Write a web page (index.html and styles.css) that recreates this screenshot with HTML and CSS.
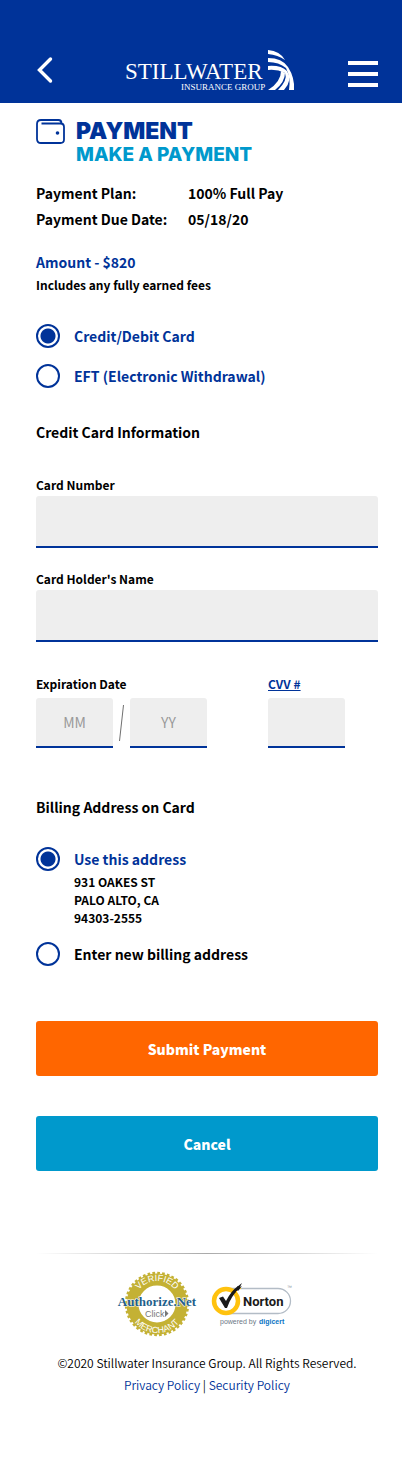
FILE: index.html
```html
<!DOCTYPE html>
<html lang="en">

<head>
    <meta charset="UTF-8">
    <meta name="viewport" content="width=device-width, initial-scale=1.0">
    <title>Make a Payment</title>
    <link rel="stylesheet" href="styles.css">
</head>

<body>
    <header class="topbar">
        <a class="back" href="#" aria-label="Back">
            <svg width="16" height="28" viewBox="0 0 16 28">
                <path d="M13.500 3L2.500 14L13.500 25" fill="none" stroke="#fff" stroke-width="3.400" stroke-linecap="round" stroke-linejoin="miter" />
            </svg>
        </a>
        <a class="logo" href="#" aria-label="Stillwater Insurance Group">
            <svg width="170" height="42" viewBox="0 0 170 42">
                <text class="logo-name" x="0" y="30">STILLWATER</text>
                <text class="logo-sub" x="56" y="41">INSURANCE GROUP</text>
                <g fill="#fff">
                    <path d="M143 1Q155 2 160 11Q153 6 143 5Z" />
                    <path d="M143 9Q157 9 163 18Q170 29 169 41H164Q166 29 161 19Q154 13 143 13Z" />
                    <path d="M143 17Q156 16 162 22Q168 31 159 41H153Q163 31 160 24Q152 20 143 21Z" />
                    <path d="M156 22L160 24Q160 33 150 41H143Q156 33 156 22Z" />
                </g>
            </svg>
        </a>
        <button class="menu" type="button" aria-label="Menu">
            <span></span>
            <span></span>
            <span></span>
        </button>
    </header>

    <main>
        <div class="heading">
            <svg width="30" height="26" viewBox="0 0 30 26" fill="none" stroke="#039" stroke-width="1.800">
                <path d="M5.500 4.500H24.500Q28 4.500 28 8V20.500Q28 24 24.500 24H5Q1 24 1 20V5Q1 1 5 1H22.500Q25.500 1 25.500 4.500" />
                <circle cx="21.500" cy="14" r="1.800" fill="#039" stroke="none" />
            </svg>
            <div>
                <h1>PAYMENT</h1>
                <h2>MAKE A PAYMENT</h2>
            </div>
        </div>

        <dl class="plan">
            <dt>Payment Plan:</dt>
            <dd>100% Full Pay</dd>
            <dt>Payment Due Date:</dt>
            <dd>05/18/20</dd>
        </dl>

        <p class="amount">Amount - $820</p>
        <p class="note">Includes any fully earned fees</p>

        <form>
            <div class="methods">
                <label class="choice"><input type="radio" name="method" checked>Credit/Debit Card</label>
                <label class="choice"><input type="radio" name="method">EFT (Electronic Withdrawal)</label>
            </div>

            <h3>Credit Card Information</h3>

            <div class="field">
                <label for="number">Card Number</label>
                <input type="text" id="number">
            </div>
            <div class="field">
                <label for="holder">Card Holder's Name</label>
                <input type="text" id="holder">
            </div>

            <div class="codes">
                <div class="field">
                    <label for="month">Expiration Date</label>
                    <div class="expiry">
                        <input type="text" id="month" placeholder="MM">
                        <svg width="5" height="38" viewBox="0 0 5 38">
                            <path d="M4.500 1L.5 37" stroke="#707070" />
                        </svg>
                        <input type="text" id="year" placeholder="YY" aria-label="Expiration year">
                    </div>
                </div>
                <div class="field cvv">
                    <label for="cvv"><a href="#">CVV #</a></label>
                    <input type="text" id="cvv">
                </div>
            </div>

            <h3>Billing Address on Card</h3>

            <label class="choice"><input type="radio" name="address" checked>Use this address</label>
            <address>
                931 OAKES ST<br>
                PALO ALTO, CA<br>
                94303-2555
            </address>
            <label class="choice dark"><input type="radio" name="address">Enter new billing address</label>

            <div class="actions">
                <button class="submit" type="submit">Submit Payment</button>
                <button class="cancel" type="button">Cancel</button>
            </div>
        </form>
    </main>

    <footer>
        <div class="line"></div>
        <div class="seals">
            <a href="#" aria-label="Authorize.Net verified merchant">
                <svg width="81" height="66" viewBox="0 0 81 66">
                    <circle cx="40" cy="33" r="24.500" fill="none" stroke="#c4b134" stroke-width="12" />
                    <circle cx="40" cy="33" r="31" fill="none" stroke="#c4b134" stroke-width="2.500" stroke-dasharray="2.700 2.170" />
                    <path id="arc-top" d="M17 33A23 23 0 0 1 63 33" fill="none" />
                    <path id="arc-bottom" d="M11 33A29 29 0 0 0 69 33" fill="none" />
                    <text class="seal-ring"><textPath href="#arc-top" startOffset="50%">VERIFIED</textPath></text>
                    <text class="seal-ring"><textPath href="#arc-bottom" startOffset="50%">MERCHANT</textPath></text>
                    <text class="seal-name" x="40" y="35">Authorize.Net</text>
                    <text class="seal-click" x="28" y="46">Click</text>
                    <path d="M48 39V46L51.500 42.500Z" fill="#777" />
                </svg>
            </a>
            <a href="#" aria-label="Norton powered by digicert">
                <svg width="82" height="44" viewBox="0 0 82 44">
                    <path d="M16 5.500H67A12.500 12.500 0 0 1 67 30.500H16" fill="#fff" stroke="#b3bcc6" stroke-width="1.300" />
                    <circle cx="15" cy="18" r="12" fill="#fff" stroke="#ffc20e" stroke-width="4.500" />
                    <path d="M8 15L12 13.500L15 18Q20 8 27 3L29 3L28 6Q20 13 16 25H14Z" fill="#1a1a1a" />
                    <path d="M26 4L31 0L29 4L31 3L27 8Z" fill="#1a1a1a" />
                    <path d="M25 8h1v1h-1zM29 5h1v1h-1z" fill="#ffc20e" />
                    <text class="norton" x="32" y="23">Norton</text>
                    <text class="powered" x="9" y="41">powered by</text>
                    <text class="digicert" x="48" y="41">digicert</text>
                    <text class="tm" x="76" y="6">™</text>
                </svg>
            </a>
        </div>
        <p>©2020 Stillwater Insurance Group. All Rights Reserved.</p>
        <p><a href="#">Privacy Policy</a> | <a href="#">Security Policy</a></p>
    </footer>
</body>

</html>
```
FILE: styles.css
```css
* {
    box-sizing: border-box;
}

body {
    margin: 0;
    background-color: #fff;
    color: #000;
    font-family: "Noto Sans CJK SC", sans-serif;
    font-size: 14px;
    line-height: 24px;
}

h1, h2, h3, p, dl, dd {
    margin: 0;
}

a {
    color: #039;
    text-decoration: none;
}

svg {
    display: block;
}

.topbar {
    display: flex;
    justify-content: space-between;
    align-items: flex-end;
    height: 103px;
    padding: 0 24px 12px 37px;
    background-color: #039;
}

.back {
    padding-bottom: 7px;
}

.logo {
    margin-left: 18px;
}

.menu {
    display: flex;
    flex-direction: column;
    gap: 7px;
    padding: 0 0 4px;
    border: 0;
    background: none;
}

.menu span {
    width: 30px;
    height: 4px;
    background-color: #fff;
}

.logo-name {
    font: 23px "Liberation Serif", serif;
    fill: #fff;
}

.logo-sub {
    font: 9px "Liberation Serif", serif;
    fill: #fff;
}

main {
    padding: 16px 24px 0 36px;
}

.heading {
    display: flex;
    gap: 10px;
}

h1 {
    font: 900 23px/24px Inter, sans-serif;
    color: #039;
}

h2 {
    font: 800 19px/24px Inter, sans-serif;
    color: #09c;
}

.plan {
    display: grid;
    grid-template-columns: 152px 1fr;
    margin-top: 13px;
    font-weight: bold;
    line-height: 26px;
}

.amount {
    margin-top: 18px;
    font-weight: bold;
    color: #039;
}

.note {
    font-size: 12px;
    line-height: 22px;
    font-weight: bold;
}

.methods {
    display: grid;
    gap: 16px;
    margin-top: 28px;
}

.choice {
    display: flex;
    align-items: center;
    gap: 14px;
    font-weight: bold;
    color: #039;
}

.dark {
    color: #000;
}

.choice input {
    appearance: none;
    width: 24px;
    height: 24px;
    margin: 0;
    border: 2px solid #039;
    border-radius: 50%;
    background-color: #fff;
}

.choice input:checked {
    background-image: radial-gradient(circle, #039 7px, #fff 8px);
}

h3 {
    font-size: 14px;
    line-height: 24px;
    margin-top: 32px;
}

.field {
    display: flex;
    flex-direction: column;
    margin-top: 30px;
}

.field + .field {
    margin-top: 20px;
}

.field label {
    font-size: 12px;
    line-height: 22px;
    font-weight: bold;
}

.field input {
    width: 100%;
    height: 52px;
    padding: 0;
    border: 0;
    border-bottom: 2px solid #039;
    border-radius: 3px 3px 0 0;
    background-color: #eee;
    font: 14px "Noto Sans CJK SC", sans-serif;
    text-align: center;
}

.field input::placeholder {
    color: #999;
}

.codes {
    display: flex;
    gap: 61px;
    margin-top: 31px;
}

.codes .field {
    gap: 3px;
    margin-top: 0;
}

.codes .field input {
    width: 77px;
    height: 50px;
}

.expiry {
    display: flex;
    align-items: center;
    gap: 6px;
}

.cvv a {
    text-decoration: underline;
}

.codes + h3 {
    margin-top: 47px;
    margin-bottom: 28px;
}

address {
    margin: 2px 0 15px 38px;
    font-size: 12px;
    font-style: normal;
    font-weight: bold;
    line-height: 18px;
}

.actions {
    display: grid;
    gap: 40px;
    margin-top: 55px;
}

.actions button {
    height: 55px;
    border: 0;
    border-radius: 3px;
    color: #fff;
    font: 900 14px "Noto Sans CJK SC", sans-serif;
}

.submit {
    background-color: #f60;
}

.cancel {
    background-color: #09c;
}

footer {
    padding: 82px 24px 60px 36px;
    font-size: 12px;
    font-weight: 350;
    line-height: 22px;
    text-align: center;
}

.line {
    height: 1px;
    background: linear-gradient(to right, #fff, #aaa, #fff);
}

.seals {
    display: flex;
    justify-content: center;
    gap: 13px;
    margin: 17px 0 15px;
    padding-right: 5px;
}

.seals a + a {
    padding-top: 12px;
}

.seal-ring {
    font: 9px "Liberation Sans", sans-serif;
    fill: #fff;
    text-anchor: middle;
}

.seal-name {
    font: bold 13px "Liberation Serif", serif;
    fill: #1f5f8b;
    stroke: #fff;
    stroke-width: 1px;
    paint-order: stroke;
    text-anchor: middle;
}

.seal-click {
    font: 9px "Liberation Sans", sans-serif;
    fill: #777;
}

.norton {
    font: bold 13px Roboto, sans-serif;
    fill: #1a1a1a;
}

.powered {
    font: 7px "Liberation Sans", sans-serif;
    fill: #6b7785;
}

.digicert {
    font: bold 7px "Liberation Sans", sans-serif;
    fill: #0a74c4;
}

.tm {
    font: 5px "Liberation Sans", sans-serif;
    fill: #8a949e;
}
```
